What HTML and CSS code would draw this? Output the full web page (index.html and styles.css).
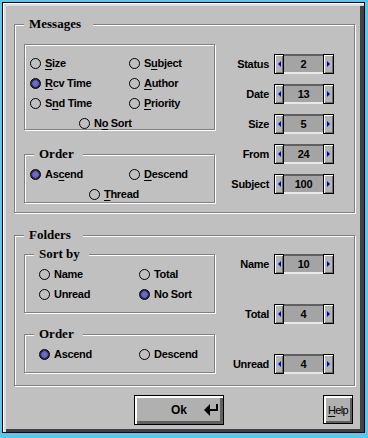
FILE: index.html
```html
<!DOCTYPE html>
<html>
    <head>
        <title>Sort Options</title>
        <meta charset="UTF-8">
        <link rel="stylesheet" href="styles.css">
    </head>
    <body>
        <div class="window">
            <div class="group messages">
                <div class="group-title">Messages</div>
                <div class="group-body">
                    <div class="col-left">
                        <div class="box msg-sort">
                            <div class="radio-grid">
                                <label class="radio"><span class="dot"></span><span><u>S</u>ize</span></label>
                                <label class="radio"><span class="dot"></span><span>S<u>u</u>bject</span></label>
                                <label class="radio"><span class="dot on"></span><span><u>R</u>cv Time</span></label>
                                <label class="radio"><span class="dot"></span><span><u>A</u>uthor</span></label>
                                <label class="radio"><span class="dot"></span><span>S<u>n</u>d Time</span></label>
                                <label class="radio"><span class="dot"></span><span><u>P</u>riority</span></label>
                                <label class="radio wide nosort"><span class="dot"></span><span>N<u>o</u> Sort</span></label>
                            </div>
                        </div>
                        <div class="box msg-order">
                            <div class="box-title">Order</div>
                            <div class="radio-grid">
                                <label class="radio"><span class="dot on"></span><span>As<u>c</u>end</span></label>
                                <label class="radio"><span class="dot"></span><span><u>D</u>escend</span></label>
                                <label class="radio wide thread"><span class="dot"></span><span><u>T</u>hread</span></label>
                            </div>
                        </div>
                    </div>
                    <div class="spins">
                        <div class="spin-row"><span class="spin-label">Status</span><div class="spin"><span class="spin-btn left"></span><span class="spin-val">2</span><span class="spin-btn right"></span></div></div>
                        <div class="spin-row"><span class="spin-label">Date</span><div class="spin"><span class="spin-btn left"></span><span class="spin-val">13</span><span class="spin-btn right"></span></div></div>
                        <div class="spin-row"><span class="spin-label">Size</span><div class="spin"><span class="spin-btn left"></span><span class="spin-val">5</span><span class="spin-btn right"></span></div></div>
                        <div class="spin-row"><span class="spin-label">From</span><div class="spin"><span class="spin-btn left"></span><span class="spin-val">24</span><span class="spin-btn right"></span></div></div>
                        <div class="spin-row"><span class="spin-label">Subject</span><div class="spin"><span class="spin-btn left"></span><span class="spin-val">100</span><span class="spin-btn right"></span></div></div>
                    </div>
                </div>
            </div>

            <div class="group folders">
                <div class="group-title">Folders</div>
                <div class="group-body">
                    <div class="col-left">
                        <div class="box fold-sort">
                            <div class="box-title">Sort by</div>
                            <div class="radio-grid">
                                <label class="radio"><span class="dot"></span><span>Name</span></label>
                                <label class="radio"><span class="dot"></span><span>Total</span></label>
                                <label class="radio"><span class="dot"></span><span>Unread</span></label>
                                <label class="radio"><span class="dot on"></span><span>No Sort</span></label>
                            </div>
                        </div>
                        <div class="box fold-order">
                            <div class="box-title">Order</div>
                            <div class="radio-grid">
                                <label class="radio"><span class="dot on"></span><span>Ascend</span></label>
                                <label class="radio"><span class="dot"></span><span>Descend</span></label>
                            </div>
                        </div>
                    </div>
                    <div class="spins spread">
                        <div class="spin-row"><span class="spin-label">Name</span><div class="spin"><span class="spin-btn left"></span><span class="spin-val">10</span><span class="spin-btn right"></span></div></div>
                        <div class="spin-row"><span class="spin-label">Total</span><div class="spin"><span class="spin-btn left"></span><span class="spin-val">4</span><span class="spin-btn right"></span></div></div>
                        <div class="spin-row"><span class="spin-label">Unread</span><div class="spin"><span class="spin-btn left"></span><span class="spin-val">4</span><span class="spin-btn right"></span></div></div>
                    </div>
                </div>
            </div>

            <div class="buttons">
                <button class="btn ok">Ok
                    <svg class="enter" width="15" height="14" viewBox="0 0 15 14">
                        <rect x="12" y="1" width="2" height="7" fill="#000"/>
                        <rect x="5" y="6" width="9" height="2" fill="#000"/>
                        <polygon points="0,7 6,1 6,13" fill="#000"/>
                    </svg>
                </button>
                <button class="btn help"><u>H</u>elp</button>
            </div>
        </div>
    </body>
</html>
```

FILE: styles.css
```css
body
{
    margin: 0;
    padding: 2px;
    background-color: #58c8f0;
    font: bold 11px "Liberation Sans", Arial, sans-serif;
    letter-spacing: -0.3px;
    color: #000;
}
div.window
{
    width: 363px;
    height: 431px;
    box-sizing: border-box;
    border: 1px solid #000;
    padding: 3px 4px 3px 3px;
    background-color: #c0c0c0;
    box-shadow: inset 1px 1px #fff, inset 3px 3px #dcdcdc, inset -4px -3px #404040;
}

/* etched group frames */
.group, .box
{
    border: 1px solid #808080;
    box-shadow: inset 1px 1px #fff, 1px 1px #fff;
}
.group
{
    width: 341px;
    box-sizing: border-box;
    margin-left: 8px;
}
.messages { margin-top: 18px; }
.folders { margin-top: 22px; }
.group-title, .box-title
{
    width: fit-content;
    margin: -9px 0 0 9px;
    padding: 0 12px 0 5px;
    line-height: 16px;
    background-color: #c0c0c0;
    font: bold 13px "Liberation Serif", "Times New Roman", serif;
    letter-spacing: 0;
}
.box-title { padding-right: 9px; }
.group-body
{
    display: flex;
    padding-left: 9px;
}
.messages .group-body { padding: 12px 0 9px 9px; }
.folders .group-body { padding: 11px 0 11px 9px; }

.col-left
{
    width: 191px;
    flex: none;
}
.box
{
    width: 191px;
    box-sizing: border-box;
}
.msg-sort { height: 86px; padding-top: 12px; }
.msg-order { margin-top: 24px; padding-bottom: 2px; }
.fold-sort { padding-bottom: 12px; }
.fold-order { margin-top: 21px; padding-bottom: 12px; }
.msg-order .radio-grid, .fold-sort .radio-grid, .fold-order .radio-grid { margin-top: 6px; }

.radio-grid
{
    display: grid;
    grid-template-columns: 99px auto;
    row-gap: 8px;
    padding-left: 5px;
}
.fold-sort .radio-grid, .fold-order .radio-grid
{
    grid-template-columns: 100px auto;
    padding-left: 14px;
}
.radio
{
    display: flex;
    align-items: center;
    height: 12px;
    line-height: 12px;
    white-space: nowrap;
}
.radio.wide { grid-column: span 2; }
.radio.nosort { padding-left: 49px; }
.radio.thread { padding-left: 59px; }
.radio u
{
    text-underline-offset: 2px;
}
.dot
{
    width: 11px;
    height: 11px;
    box-sizing: border-box;
    border: 1px solid #000;
    border-radius: 50%;
    margin-right: 4px;
    flex: none;
}
.dot.on
{
    background: radial-gradient(circle, #7070d8 0, #6060c8 3px, #303048 3.6px);
}

/* spin boxes */
.spins
{
    display: flex;
    flex-direction: column;
    gap: 10px;
    margin-top: 10px;
}
.spins.spread
{
    gap: 30px;
    margin-top: 0;
}
.spin-row
{
    display: grid;
    grid-template-columns: 54px 60px;
    column-gap: 5px;
    align-items: center;
}
.spin-label { text-align: right; }
.spin
{
    display: flex;
    height: 20px;
}
.spin-btn
{
    width: 10px;
    box-sizing: border-box;
    border: 1px solid #000;
    background-color: #b4b4b4;
    box-shadow: inset 1px 1px #fff, inset -1px -1px #707070;
    display: flex;
    align-items: center;
    justify-content: center;
    flex: none;
}
.spin-btn.right { width: 11px; }
.spin-btn::after
{
    content: "";
    border-top: 3px solid transparent;
    border-bottom: 3px solid transparent;
}
.spin-btn.left::after { border-right: 3px solid #0000d0; }
.spin-btn.right::after { border-left: 3px solid #0000d0; }
.spin-val
{
    flex: 1;
    box-sizing: border-box;
    border-top: 2px solid #606060;
    border-bottom: 2px solid #e8e8e8;
    background-color: #a4a4a4;
    text-align: center;
    line-height: 16px;
}

/* bottom buttons */
.buttons
{
    display: flex;
    margin-top: 9px;
}
.btn
{
    box-sizing: border-box;
    border: 1px solid #000;
    background-color: #b0b0b0;
    box-shadow: inset 2px 2px #fff, inset -3px -3px #606060;
    color: #000;
    padding: 0;
    font: bold 12px "Liberation Sans", Arial, sans-serif;
}
.btn.ok
{
    width: 90px;
    height: 30px;
    margin-left: 128px;
    display: flex;
    align-items: center;
    padding-left: 36px;
}
.enter { margin-left: 17px; }
.btn.help
{
    width: 30px;
    height: 29px;
    margin-left: auto;
    margin-right: 7px;
    font: 11px "Liberation Sans", Arial, sans-serif;
    letter-spacing: -0.6px;
    box-shadow: inset 2px 2px #fff, inset -2px -2px #606060;
}
.btn.help u { text-underline-offset: 2px; }
```
